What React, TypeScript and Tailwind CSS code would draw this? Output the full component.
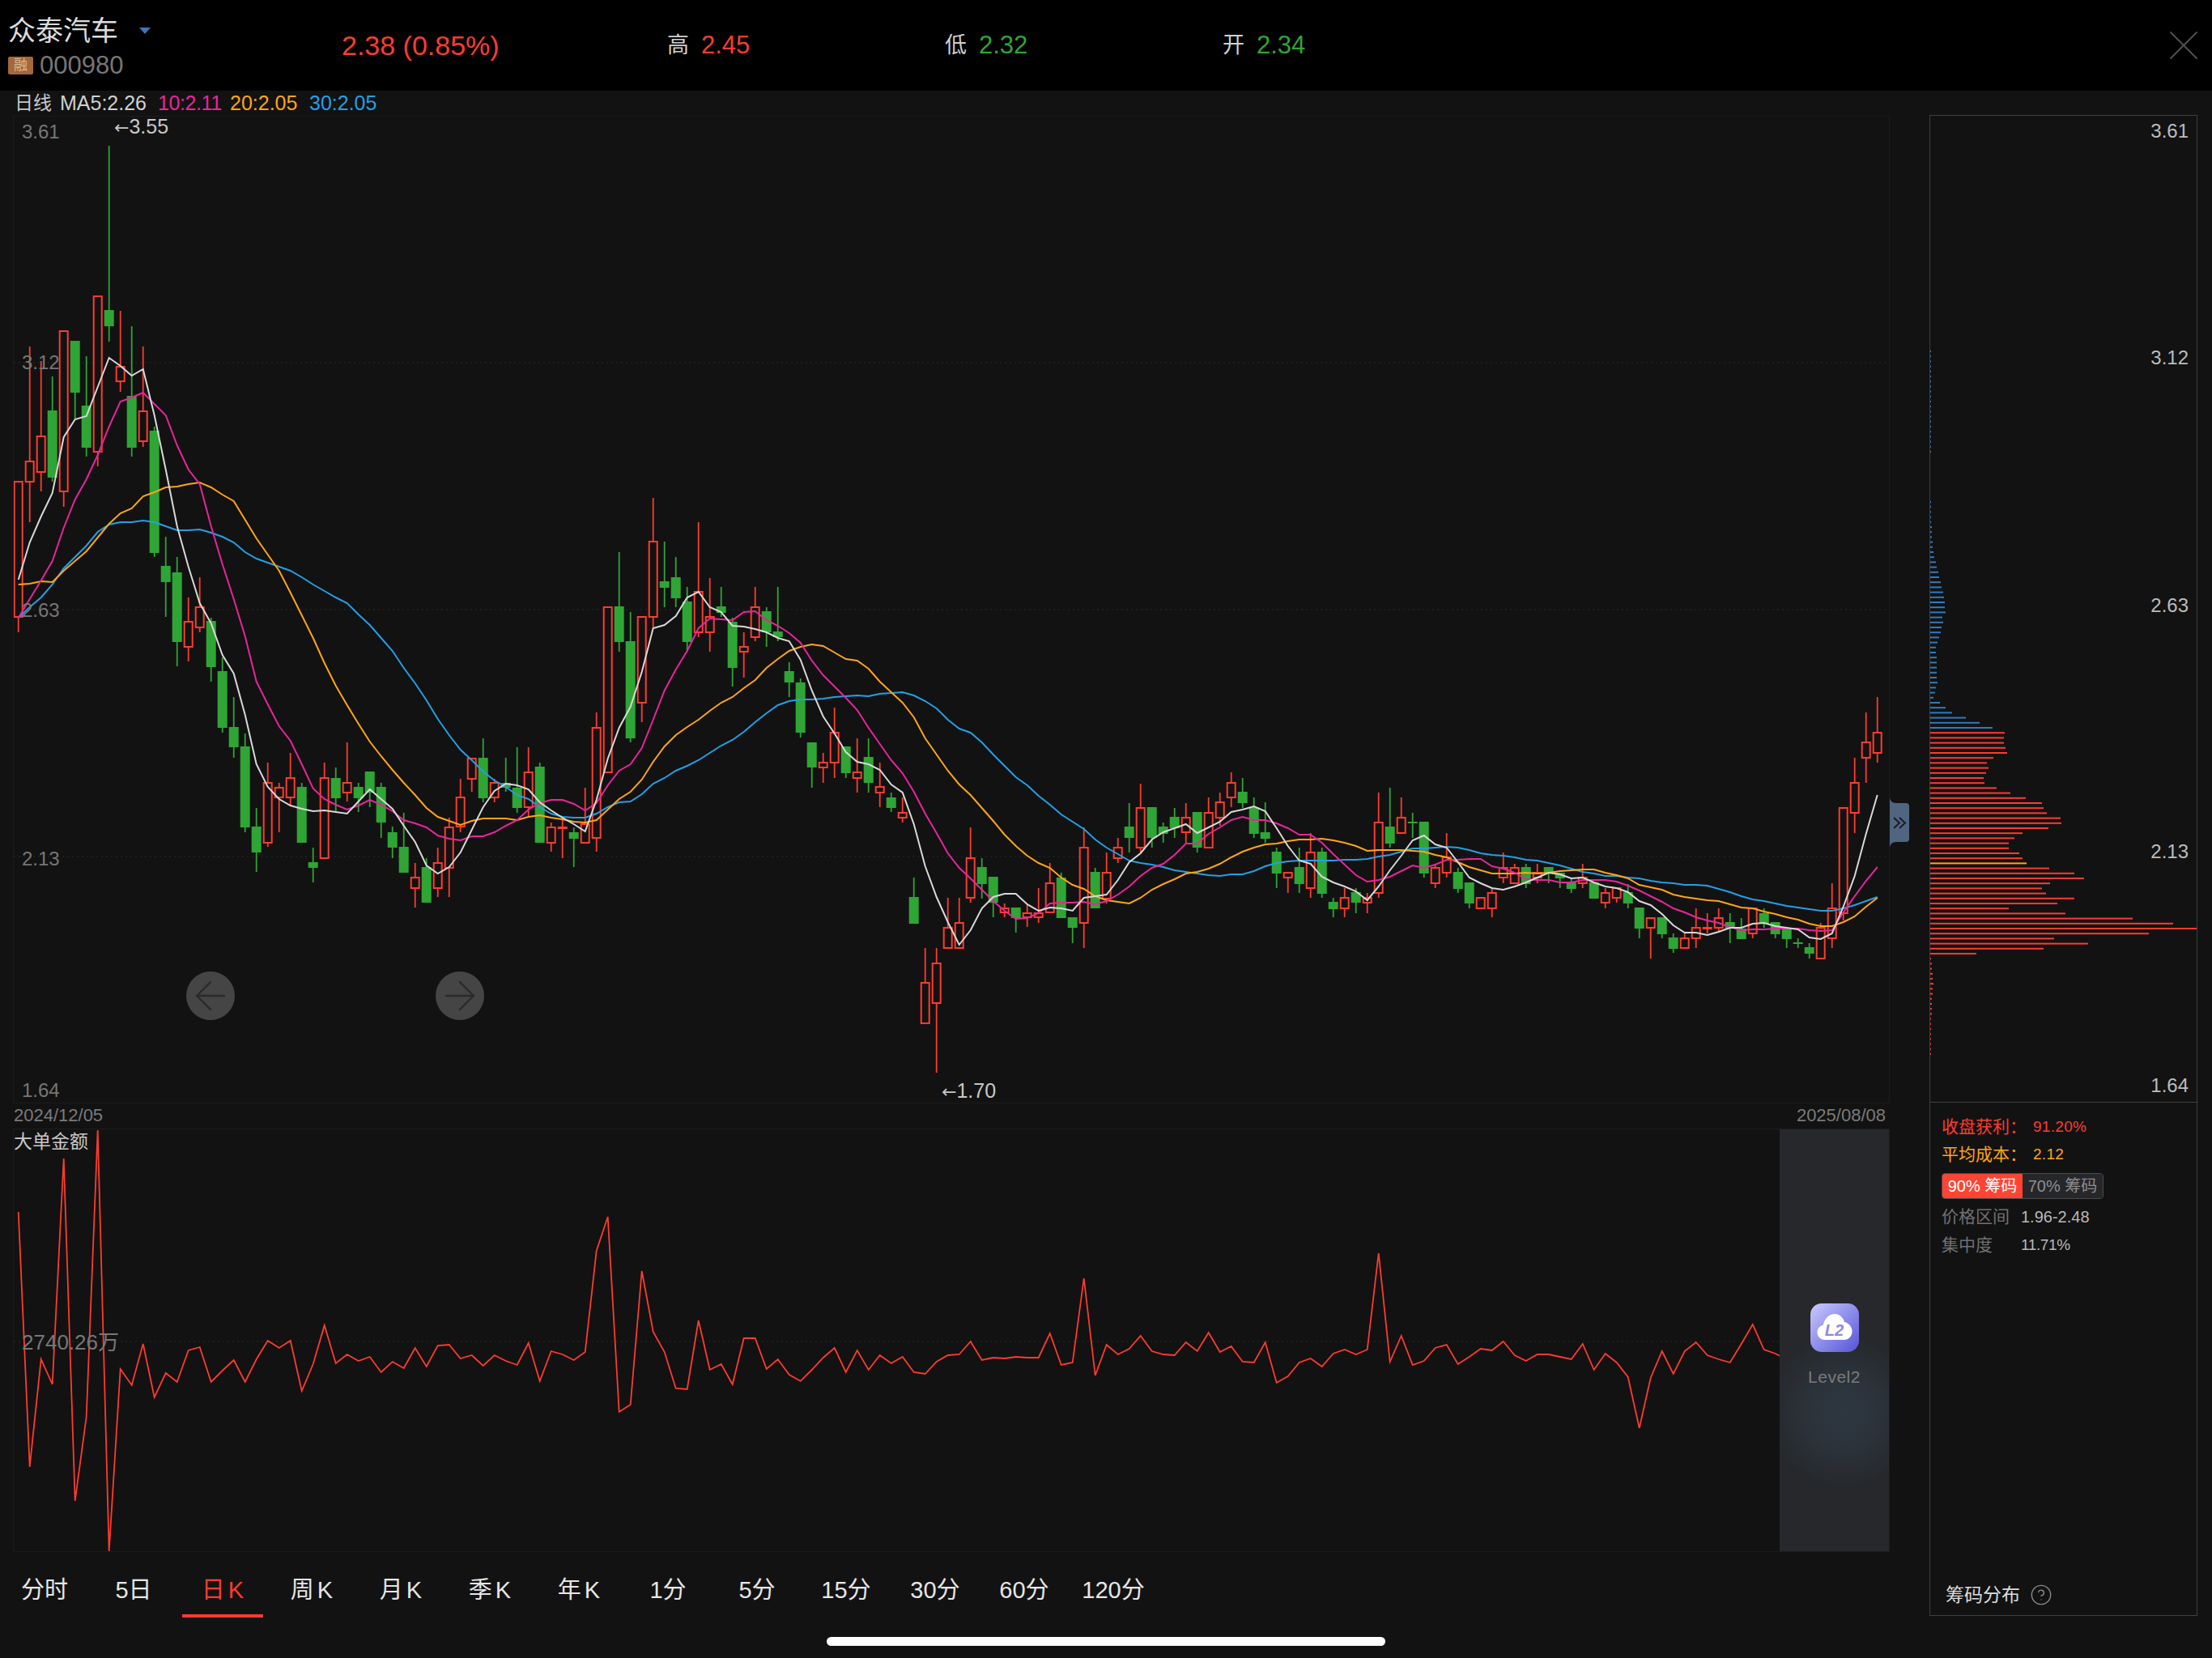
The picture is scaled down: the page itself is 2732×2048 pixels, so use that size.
import { ArrowLeft, ArrowRight, CircleHelp, X } from "lucide-react"

const RED = "#ff3b30"
const GREEN = "#2fa535"

// up, body top, body bottom, high, low (page px)
const candles: [number, number, number, number, number][] = [
  [1,595,762,595,781],[1,570,595,428,645],[1,539,583,446,607],[0,507,590,465,595],[1,409,607,409,626],
  [0,421,485,421,517],[0,501,553,440,564],[1,366,558,366,576],[0,383,403,180,422],[1,453,471,384,484],
  [0,489,553,403,564],[1,508,545,428,552],[0,532,683,527,688],[0,699,719,663,762],[0,707,793,688,823],
  [1,768,799,738,817],[1,750,775,713,781],[0,767,824,763,842],[0,829,899,812,905],[0,898,923,861,936],
  [0,922,1022,906,1028],[0,1021,1053,998,1077],[1,967,1041,942,1046],[1,973,985,967,1028],[1,961,985,930,996],
  [0,972,1041,967,1041],[0,1065,1072,1047,1090],[1,961,1060,942,1060],[0,961,986,948,1002],[1,967,979,917,990],
  [0,972,986,967,1003],[0,953,979,953,997],[0,972,1016,967,1035],[0,1028,1047,1021,1060],[0,1046,1078,1004,1078],
  [1,1084,1097,1066,1121],[0,1071,1115,1060,1115],[1,1066,1097,1047,1108],[1,1022,1072,1010,1108],[1,985,1021,962,1028],
  [1,937,962,937,978],[0,936,986,912,991],[1,967,985,962,991],[0,967,973,936,978],[0,973,998,923,1004],
  [1,954,997,923,1009],[0,947,1041,942,1041],[1,1022,1041,1016,1052],[1,1022,1023,1009,1060],[0,1028,1036,1022,1071],
  [1,1018,1041,973,1041],[1,899,1035,880,1052],[1,750,954,750,954],[0,749,793,682,805],[0,792,912,756,917],
  [1,762,868,762,892],[1,669,762,615,776],[0,718,726,669,750],[0,713,739,688,750],[0,743,793,725,805],
  [1,731,781,645,787],[1,762,781,714,805],[0,749,757,725,762],[0,768,825,763,848],[1,799,805,781,837],
  [1,750,787,725,792],[0,755,781,750,799],[0,780,787,725,792],[0,829,843,818,861],[0,843,905,838,911],
  [0,917,948,917,973],[1,942,948,930,967],[1,905,942,874,961],[0,922,955,922,961],[1,954,961,912,979],
  [0,935,967,912,979],[1,972,979,942,997],[0,985,998,979,1003],[1,1004,1010,985,1016],[0,1108,1141,1084,1141],
  [1,1214,1264,1171,1264],[1,1190,1239,1171,1325],[1,1146,1171,1109,1171],[1,1140,1171,1109,1171],[1,1060,1109,1022,1115],
  [0,1071,1092,1060,1110],[0,1083,1115,1083,1133],[1,1122,1127,1116,1133],[0,1121,1134,1121,1152],[1,1128,1133,1116,1145],
  [1,1128,1133,1097,1140],[1,1091,1127,1066,1127],[0,1084,1134,1078,1134],[0,1133,1146,1133,1165],[1,1047,1140,1022,1171],
  [0,1077,1122,1072,1122],[1,1078,1110,1053,1116],[1,1047,1060,1035,1066],[0,1021,1035,992,1053],[1,998,1047,968,1053],
  [0,997,1035,997,1047],[0,1021,1030,1016,1041],[0,1009,1023,998,1035],[1,1010,1028,992,1041],[0,1003,1047,1003,1053],
  [1,1004,1047,985,1047],[1,991,1010,979,1020],[1,967,985,954,997],[0,978,992,961,998],[0,997,1030,985,1035],
  [0,1028,1036,991,1041],[0,1052,1079,1047,1097],[1,1078,1084,1078,1103],[0,1071,1092,1047,1103],[1,1053,1097,1029,1109],
  [0,1052,1104,1047,1109],[0,1114,1123,1109,1133],[1,1109,1122,1097,1133],[0,1102,1115,1097,1128],[1,1109,1115,1103,1128],
  [1,1016,1103,979,1109],[0,1021,1042,973,1047],[1,1010,1029,985,1029],[0,1015,1017,1004,1035],[0,1015,1079,1015,1084],
  [1,1072,1091,1067,1097],[1,1059,1078,1029,1084],[0,1077,1098,1072,1103],[0,1090,1116,1090,1122],[1,1109,1122,1109,1122],
  [1,1103,1122,1097,1133],[1,1072,1084,1053,1091],[1,1072,1091,1067,1091],[0,1071,1092,1067,1097],[1,1078,1084,1067,1091],
  [0,1071,1078,1071,1091],[0,1078,1085,1078,1097],[0,1090,1098,1085,1103],[1,1084,1091,1067,1097],[0,1090,1110,1090,1110],
  [1,1103,1115,1097,1122],[1,1097,1109,1097,1115],[0,1102,1116,1092,1122],[0,1121,1147,1121,1159],[1,1134,1146,1134,1184],
  [0,1133,1154,1133,1159],[0,1158,1172,1153,1177],[1,1159,1171,1153,1171],[1,1146,1159,1122,1171],[1,1146,1147,1128,1153],
  [1,1134,1146,1122,1152],[0,1139,1147,1128,1165],[0,1147,1160,1134,1160],[1,1122,1153,1122,1159],[0,1128,1141,1122,1146],
  [0,1139,1154,1139,1159],[0,1146,1160,1146,1171],[0,1164,1166,1159,1171],[0,1170,1178,1165,1184],[1,1146,1184,1140,1184],
  [1,1122,1159,1091,1171],[1,998,1128,998,1137],[1,967,1004,936,1029],[1,917,936,880,967],[1,905,930,861,942],
]

const ma5 = [
  716,670,638,609,540,518,514,478,442,452,464,456,513,580,650,700,745,770,809,832,
  883,944,972,987,995,999,1002,1001,1003,1005,990,975,987,999,1020,1040,1069,1079,1071,1053,
  1025,997,977,968,970,975,991,1001,1010,1018,1027,988,937,899,873,830,776,772,761,738,
  731,750,756,773,774,777,781,788,792,815,853,885,906,929,941,944,951,969,979,1018,
  1070,1108,1139,1167,1149,1122,1108,1104,1104,1117,1125,1121,1122,1125,1109,1107,1105,1087,1065,1054,
  1037,1028,1023,1018,1029,1022,1015,1003,1000,996,1002,1023,1045,1063,1067,1083,1090,1095,1101,1112,
  1095,1075,1057,1038,1032,1043,1047,1065,1084,1091,1097,1099,1095,1090,1084,1078,1080,1085,1084,1090,
  1095,1097,1102,1113,1118,1129,1143,1152,1152,1155,1151,1146,1146,1141,1140,1144,1146,1148,1158,1160,
  1153,1120,1082,1030,982,
]
const ma10 = [
  763,740,717,693,652,617,592,562,527,496,491,485,499,513,550,580,598,650,697,740,
  786,842,870,897,915,944,974,987,994,1000,995,988,994,1002,1013,1017,1022,1032,1036,1038,
  1033,1033,1028,1020,1013,1000,992,988,988,993,1001,992,970,952,944,924,889,853,827,804,
  776,764,765,766,756,755,766,773,782,794,816,834,848,862,877,899,919,939,955,978,
  1005,1029,1054,1072,1085,1099,1113,1125,1135,1134,1128,1116,1115,1115,1114,1117,1113,1105,1095,1082,
  1072,1067,1056,1042,1042,1030,1022,1013,1009,1013,1013,1017,1023,1031,1031,1041,1055,1068,1081,1089,
  1087,1083,1076,1069,1072,1068,1062,1062,1061,1061,1070,1073,1078,1086,1087,1087,1090,1090,1087,1087,
  1087,1089,1094,1100,1107,1114,1122,1127,1133,1137,1140,1145,1149,1148,1148,1147,1147,1147,1149,1150,
  1149,1127,1107,1088,1071,
]
const ma20 = [
  722,721,718,719,705,693,681,664,647,634,628,613,608,602,601,598,596,602,611,619,
  642,665,685,705,732,760,788,819,847,871,894,916,934,951,967,982,998,1009,1014,1019,
  1014,1011,1011,1011,1013,1009,1007,1010,1012,1015,1016,1013,1000,987,978,963,941,922,908,898,
  889,878,868,861,850,840,825,814,804,799,796,798,806,814,816,826,842,855,868,886,
  912,932,952,969,982,998,1014,1031,1045,1057,1066,1072,1084,1093,1098,1107,1112,1114,1116,1109,
  1099,1092,1086,1079,1077,1073,1067,1059,1052,1047,1043,1042,1039,1037,1037,1036,1038,1041,1045,1051,
  1050,1050,1050,1051,1052,1056,1059,1065,1071,1075,1079,1079,1079,1078,1079,1078,1076,1075,1074,1074,
  1078,1081,1085,1093,1096,1099,1105,1108,1110,1112,1113,1117,1121,1122,1126,1129,1133,1136,1141,1144,
  1144,1139,1132,1120,1109,
]
const ma30 = [
  763,750,738,722,702,688,674,657,648,645,645,643,645,650,655,655,654,658,663,670,
  682,690,695,700,705,713,722,730,738,745,759,772,788,804,825,844,865,888,908,926,
  939,953,964,972,982,987,997,1005,1009,1010,1010,1005,997,991,990,981,968,961,952,946,
  939,930,921,914,904,892,881,871,866,864,864,863,861,860,859,860,857,856,855,859,
  866,875,889,900,905,917,932,946,960,970,983,994,1006,1015,1024,1037,1047,1055,1063,1066,
  1068,1071,1075,1077,1079,1081,1082,1080,1080,1076,1070,1066,1064,1063,1063,1063,1063,1062,1062,1061,
  1058,1056,1052,1048,1048,1047,1046,1047,1050,1054,1056,1057,1059,1062,1063,1066,1069,1073,1077,1079,
  1082,1082,1084,1085,1088,1090,1091,1093,1093,1094,1098,1102,1107,1111,1113,1116,1119,1121,1123,1125,
  1125,1122,1118,1113,1108,
]

// big order amount, y read off the chart
const bigOrders = [
  1497,1812,1679,1710,1431,1854,1750,1396,1916,1691,1711,1660,1726,1696,1707,1668,1664,1707,1693,1680,
  1707,1679,1656,1665,1656,1718,1685,1637,1684,1673,1681,1676,1695,1682,1690,1665,1688,1662,1661,1678,
  1674,1687,1674,1681,1686,1659,1706,1669,1673,1680,1670,1545,1503,1744,1735,1570,1645,1670,1715,1716,
  1631,1692,1685,1710,1653,1653,1691,1679,1698,1706,1692,1677,1665,1695,1668,1692,1674,1684,1676,1695,
  1697,1682,1674,1673,1657,1680,1677,1678,1676,1677,1677,1647,1686,1683,1579,1699,1661,1673,1666,1650,
  1669,1673,1674,1658,1669,1646,1670,1663,1682,1683,1658,1708,1700,1683,1678,1688,1672,1667,1673,1667,
  1548,1682,1650,1686,1681,1665,1661,1685,1676,1666,1668,1657,1674,1681,1673,1673,1676,1679,1660,1692,
  1672,1683,1701,1764,1702,1669,1697,1669,1658,1674,1679,1683,1660,1636,1667,1672,1679,
]

// chip rows every 6.2px, from y=434
const chipWidths: number[] = [
  1,1,1,1,1,1,1,1,1,1,1,1,1,1,1,1,1,1,1,1,1,0,0,0,0,0,0,0,0,0,
  1,1,1,1,1,2,2,2,3,3,4,5,7,8,10,11,13,14,16,17,18,18,19,15,16,14,13,11,9,7,
  7,8,8,8,8,8,9,7,6,4,12,19,27,44,61,77,
  92,91,91,93,95,78,70,72,69,66,67,82,99,118,138,140,144,161,162,146,
  114,104,97,97,110,114,119,147,178,190,148,138,143,178,157,97,167,250,300,331,
  270,153,195,140,57,1,2,2,3,3,4,3,3,2,2,2,2,1,1,1,1,1,1,1,1,
]

const tabs = ["分时", "5日", "日 K", "周 K", "月 K", "季 K", "年 K", "1分", "5分", "15分", "30分", "60分", "120分"]

const xAt = (i: number) => 22.7 + 14 * i
const linePoints = (ys: number[]) => ys.map((y, i) => `${xAt(i)},${y}`).join(" ")

function Candles() {
  return (
    <>
      {candles.map(([up, top, bot, high, low], i) => {
        const x = xAt(i)
        const color = up ? RED : GREEN
        if (!up) {
          return (
            <g key={i}>
              <line x1={x} x2={x} y1={high} y2={low} stroke={color} strokeWidth={1.8} />
              <rect x={x - 6} y={top} width={12} height={Math.max(bot - top, 2)} fill={color} />
            </g>
          )
        }
        return (
          <g key={i}>
            <line x1={x} x2={x} y1={high} y2={top} stroke={color} strokeWidth={1.8} />
            <line x1={x} x2={x} y1={bot} y2={low} stroke={color} strokeWidth={1.8} />
            <rect x={x - 5} y={top} width={10} height={Math.max(bot - top, 1)} fill="#121212" stroke={color} strokeWidth={2} />
          </g>
        )
      })}
    </>
  )
}

function PriceTick({ top, value }: { top: string; value: string }) {
  return <span className={`absolute left-[10px] text-[24px] leading-[28px] text-[#767676] ${top}`}>{value}</span>
}

function ExtremeTag({ pos, value }: { pos: string; value: string }) {
  return (
    <span className={`absolute text-[25px] leading-[28px] text-[#c8c8c8] ${pos}`}>
      <span className="text-[22px] [font-family:'DejaVu_Sans',sans-serif]">←</span>
      {value}
    </span>
  )
}

function MainChart() {
  return (
    <div className="relative h-[1220px] border border-[#1b1b1b]">
      <svg className="block h-[1218px] w-[2316px]" viewBox="17 144 2316 1218">
        {[448, 753, 1058].map((y) => (
          <line key={y} x1={17} x2={2333} y1={y} y2={y} stroke="#232323" strokeDasharray="2 4" strokeWidth={1.5} />
        ))}
        <Candles />
        <polyline points={linePoints(ma30)} fill="none" stroke="#249fe6" strokeWidth={2} />
        <polyline points={linePoints(ma20)} fill="none" stroke="#ffa516" strokeWidth={2} />
        <polyline points={linePoints(ma10)} fill="none" stroke="#e8259b" strokeWidth={2} />
        <polyline points={linePoints(ma5)} fill="none" stroke="#d8d8d8" strokeWidth={2} />
      </svg>
      <PriceTick top="top-[5px]" value="3.61" />
      <PriceTick top="top-[290px]" value="3.12" />
      <PriceTick top="top-[596px]" value="2.63" />
      <PriceTick top="top-[903px]" value="2.13" />
      <PriceTick top="top-[1189px]" value="1.64" />
      <ExtremeTag pos="left-[124px] top-[-2px]" value="3.55" />
      <ExtremeTag pos="left-[1146px] top-[1189px]" value="1.70" />
      <button className="absolute left-[213px] top-[1056px] flex h-[60px] w-[60px] items-center justify-center rounded-full bg-[#454545] text-[#2b2b2b]">
        <ArrowLeft size={58} strokeWidth={1} />
      </button>
      <button className="absolute left-[521px] top-[1056px] flex h-[60px] w-[60px] items-center justify-center rounded-full bg-[#454545] text-[#2b2b2b]">
        <ArrowRight size={58} strokeWidth={1} />
      </button>
      <svg className="absolute left-[2317px] top-[840px] h-[64px] w-[24px]" viewBox="0 0 24 64">
        <path d="M0 0 C0 5 3 8 8 8 L20 8 Q24 8 24 12 L24 52 Q24 56 20 56 L8 56 C3 56 0 59 0 64 Z" fill="#4f6580" />
        <polyline points="5,26 12,32.5 5,39" fill="none" stroke="#17191c" strokeWidth={1.8} />
        <polyline points="12,26 19,32.5 12,39" fill="none" stroke="#17191c" strokeWidth={1.8} />
      </svg>
    </div>
  )
}

function Level2Card() {
  return (
    <div className="absolute bottom-0 right-0 top-0 flex w-[135px] flex-col items-center bg-[#26282b] bg-[radial-gradient(ellipse_95px_95px_at_58%_67%,#2e3741_0%,#2b323a_50%,#26282b_100%),linear-gradient(180deg,#202428_0%,#26282b_30%)] pt-[215px]">
      <div className="flex h-[60px] w-[60px] items-center justify-center rounded-[14px] bg-gradient-to-br from-[#cdc9fc] to-[#5751d6]">
        <svg className="h-[60px] w-[60px]" viewBox="0 0 60 60">
          <path d="M18 45 C12 45 8.5 40.5 8.5 36 C8.5 31 12 27.5 16 26.5 C17 19 23 13 30 13 C36 13 40.5 17.5 42 23 C47.5 24 51.5 29 51.5 34.5 C51.5 40.5 47 45 42 45 Z" fill="#fff" />
          <text x="29.5" y="40" textAnchor="middle" fontSize="20" fontWeight="700" fontStyle="italic" fill="#8f8ae8">L2</text>
        </svg>
      </div>
      <span className="mt-[18px] text-[21px] leading-[26px] tracking-[0.5px] text-[#7b7b7b]">Level2</span>
    </div>
  )
}

function SubChart() {
  return (
    <div className="relative h-[523px] border border-[#1b1b1b]">
      <svg className="block h-[521px] w-[2316px]" viewBox="17 1395 2316 521">
        <line x1={17} x2={2333} y1={1657} y2={1657} stroke="#232323" strokeDasharray="2 4" strokeWidth={1.5} />
        <polyline points={linePoints(bigOrders)} fill="none" stroke={RED} strokeWidth={1.8} />
      </svg>
      <span className="absolute left-[0px] top-[1px] text-[23px] leading-[28px] text-[#c8c8c8]">大单金额</span>
      <span className="absolute left-[10px] top-[249px] text-[26px] leading-[28px] text-[#777]">2740.26万</span>
      <Level2Card />
    </div>
  )
}

function ChipPanel() {
  return (
    <div className="flex h-[1854px] flex-col border border-[#3f3f3f]">
      <div className="relative h-[1219px] border-b border-[#3f3f3f]">
        <svg className="block h-[1218px] w-[329px]" viewBox="2384 143 329 1218">
          {chipWidths.map((w, n) =>
            w > 0 ? (
              <rect
                key={n}
                x={2384}
                y={434 + 6.2 * n - 1}
                width={w}
                height={2}
                fill={n === 102 ? "#ffa516" : n <= 75 ? "#2f7abf" : RED}
              />
            ) : null
          )}
        </svg>
        <span className="absolute right-[10px] top-[5px] text-[24px] leading-[28px] text-[#bcbcbc]">3.61</span>
        <span className="absolute right-[10px] top-[285px] text-[24px] leading-[28px] text-[#bcbcbc]">3.12</span>
        <span className="absolute right-[10px] top-[591px] text-[24px] leading-[28px] text-[#bcbcbc]">2.63</span>
        <span className="absolute right-[10px] top-[895px] text-[24px] leading-[28px] text-[#bcbcbc]">2.13</span>
        <span className="absolute right-[10px] top-[1184px] text-[24px] leading-[28px] text-[#bcbcbc]">1.64</span>
      </div>
      <div className="flex flex-1 flex-col pl-[14px] pt-[17px]">
        <div className="flex h-[26px] items-center text-[#ff3b30]">
          <span className="w-[113px] text-[21px]">收盘获利：</span>
          <span className="text-[19px] tracking-[0.3px]">91.20%</span>
        </div>
        <div className="mt-[8px] flex h-[26px] items-center text-[#ffa516]">
          <span className="w-[113px] text-[21px]">平均成本：</span>
          <span className="text-[19px] tracking-[0.3px]">2.12</span>
        </div>
        <div className="mt-[10px] flex h-[32px] w-[200px] overflow-hidden rounded-[4px] border border-[#4a4a4a] text-[20px] leading-[30px]">
          <span className="w-[99px] bg-[#ff4433] text-center text-white">90% 筹码</span>
          <span className="flex-1 bg-[#26272a] text-center text-[#8e8e8e]">70% 筹码</span>
        </div>
        <div className="mt-[9px] flex h-[26px] items-center">
          <span className="w-[98px] text-[21px] text-[#707070]">价格区间</span>
          <span className="text-[20px] text-[#b8b8b8]">1.96-2.48</span>
        </div>
        <div className="mt-[9px] flex h-[26px] items-center">
          <span className="w-[98px] text-[21px] text-[#707070]">集中度</span>
          <span className="text-[19px] tracking-[-0.4px] text-[#b8b8b8]">11.71%</span>
        </div>
        <div className="mt-auto flex items-center gap-[12px] pb-[11px] pl-[5px]">
          <span className="text-[23px] leading-[28px] text-[#dcdcdc]">筹码分布</span>
          <CircleHelp size={28} strokeWidth={1.2} className="text-[#8a8a8a]" />
        </div>
      </div>
    </div>
  )
}

export default function App() {
  return (
    <div className="flex h-[2048px] w-[2732px] flex-col overflow-hidden bg-[#121212] [font-family:'Liberation_Sans','Noto_Sans_CJK_SC',sans-serif]">
      <header className="flex h-[112px] items-center bg-black">
        <div className="flex h-full w-[422px] flex-col pl-[10px] pt-[20px]">
          <div className="flex h-[36px] items-center">
            <span className="text-[34px] leading-[36px] text-[#dcdcdc]">众泰汽车</span>
            <svg className="ml-[26px] h-[8px] w-[14px]" viewBox="0 0 14 8">
              <polygon points="0,0 14,0 7,8" fill="#3a76b8" />
            </svg>
          </div>
          <div className="mt-[13px] flex h-[24px] items-center gap-[8px]">
            <span className="flex h-[22px] w-[31px] items-center justify-center rounded-[2px] bg-[#a5683a] text-[17px] text-[#d9b99a]">融</span>
            <span className="text-[31px] leading-[24px] text-[#767676]">000980</span>
          </div>
        </div>
        <div className="w-[402px] text-[34px] text-[#ff3b30]">2.38 (0.85%)</div>
        <div className="flex w-[343px] items-center gap-[15px] text-[31px]">
          <span className="text-[27px] text-[#d0d0d0]">高</span>
          <span className="text-[#ff3b30]">2.45</span>
        </div>
        <div className="flex w-[343px] items-center gap-[15px] text-[31px]">
          <span className="text-[27px] text-[#d0d0d0]">低</span>
          <span className="text-[#2fa535]">2.32</span>
        </div>
        <div className="flex items-center gap-[15px] text-[31px]">
          <span className="text-[27px] text-[#d0d0d0]">开</span>
          <span className="text-[#2fa535]">2.34</span>
        </div>
        <X size={64} strokeWidth={0.75} className="ml-auto mr-[3px] text-[#505050]" />
      </header>

      <div className="flex h-[1884px]">
        <div className="w-[2334px] pl-[16px]">
          <div className="flex h-[31px] items-center pl-[2px] text-[25px]">
            <span className="w-[56px] text-[23px] text-[#c8c8c8]">日线</span>
            <span className="w-[121px] text-[#d0d0d0]">MA5:2.26</span>
            <span className="w-[89px] tracking-[-0.4px] text-[#e8259b]">10:2.11</span>
            <span className="w-[98px] text-[#ffa516]">20:2.05</span>
            <span className="text-[#249fe6]">30:2.05</span>
          </div>
          <MainChart />
          <div className="flex h-[31px] items-center justify-between pb-[2px] pl-[1px] pr-[5px] text-[22px] text-[#7a7a7a]">
            <span>2024/12/05</span>
            <span>2025/08/08</span>
          </div>
          <SubChart />
          <nav className="-ml-[16px] mt-[30px] flex">
            {tabs.map((tab) => {
              const active = tab === "日 K"
              return (
                <div key={tab} className="flex w-[110px] flex-col items-center">
                  <span className={active ? "h-[34px] text-[29px] leading-[34px] text-[#ff3b30] [word-spacing:-4px]" : "h-[34px] text-[29px] leading-[34px] text-[#e6e6e6] [word-spacing:-4px]"}>
                    {tab}
                  </span>
                  {active && <span className="mt-[13px] h-[4px] w-[100px] bg-[#ff3b30]" />}
                </div>
              )
            })}
          </nav>
        </div>
        <div className="ml-[49px] w-[331px] pt-[30px]">
          <ChipPanel />
        </div>
      </div>

      <div className="flex justify-center pt-[26px]">
        <div className="h-[11px] w-[690px] rounded-full bg-white" />
      </div>
    </div>
  )
}
